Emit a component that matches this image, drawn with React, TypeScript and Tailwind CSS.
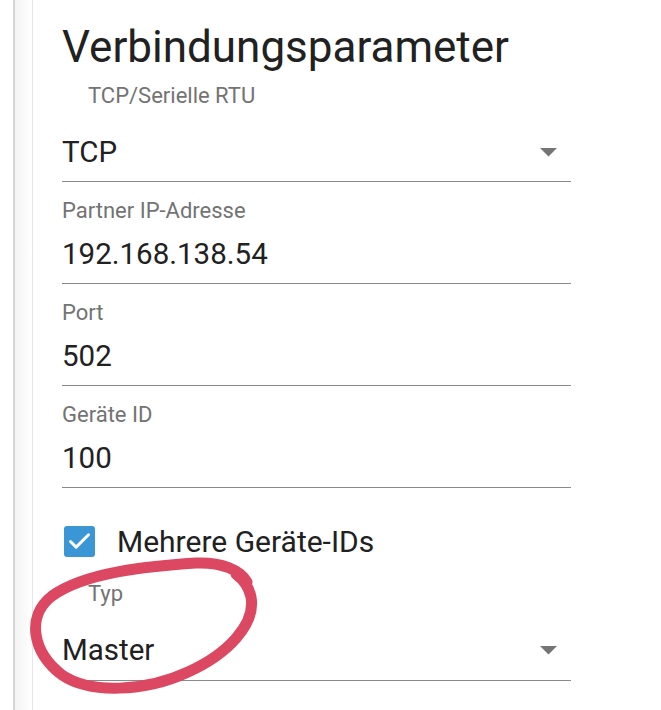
import { Check } from "lucide-react";

function Arrow(){
return(
<svg width="17" height="9" viewBox="0 0 17 9" className="mr-[14px]">
<path d="M0 0 L17 0 L8.5 8.5 Z" fill="#757575"/>
</svg>
);
}

function Field({label,value}:{label:string;value:string}){
return(
<div className="flex flex-col">
<div className="h-[56px] flex items-center text-[22px] text-[#737373]">{label}</div>
<div className="h-[32px] flex items-center text-[29.5px] text-[#212121]">{value}</div>
<div className="h-[13px]"/>
<div className="h-px bg-[#8a8a8a]"/>
</div>
);
}

export default function App(){

return(

<div className="relative w-[661px] h-[710px] bg-white overflow-hidden flex font-['Roboto',sans-serif]">

{/* side rails */}
<div className="w-[13px]"/>
<div className="w-[2px] bg-[#d6d6d6]"/>
<div className="w-[17px] bg-gradient-to-r from-[#f3f3f3] to-white"/>
<div className="w-px bg-[#e6e6e6]"/>

{/* content */}
<div className="pl-[29px] w-[538px] flex flex-col">

<div className="h-[22px]"/>
<div className="h-[50px] flex items-center text-[44px] text-[#212121]">
Verbindungsparameter
</div>

<div className="h-[46px] flex items-center pl-[26px] text-[22px] text-[#737373]">
TCP/Serielle RTU
</div>

<div className="mt-[18px] h-[32px] flex items-center justify-between text-[29.5px] text-[#212121]">
<span>TCP</span>
<Arrow/>
</div>
<div className="h-[13px]"/>
<div className="h-px bg-[#8a8a8a]"/>

<Field label="Partner IP-Adresse" value="192.168.138.54"/>
<Field label="Port" value="502"/>
<Field label="Geräte ID" value="100"/>

<div className="mt-[37px] h-[32px] flex items-center gap-[22px]">
<div className="ml-[2px] w-[31px] h-[31px] rounded-[3px] bg-[#3a96d4] flex items-center justify-center">
<Check size={27} strokeWidth={2.6} color="white"/>
</div>
<span className="text-[30px] text-[#212121]">Mehrere Geräte-IDs</span>
</div>

<div className="h-[72px] flex items-center pl-[26px] text-[22px] text-[#737373]">
Typ
</div>

<div className="mt-[5px] h-[32px] flex items-center justify-between text-[29.5px] text-[#212121]">
<span>Master</span>
<Arrow/>
</div>
<div className="h-[14px]"/>
<div className="h-px bg-[#8a8a8a]"/>

</div>

{/* hand drawn annotation */}
<svg className="absolute left-0 top-0 pointer-events-none" width="661" height="710" viewBox="0 0 661 710">
<path
d="M247 582 C240 570 222 562 196 563 C150 566 85 572 52 596 C26 616 32 652 62 675 C90 694 145 692 188 672 C228 654 256 624 251 597 C249 587 244 580 236 574"
fill="none"
stroke="#dc4862"
strokeWidth="11"
strokeLinecap="round"
strokeLinejoin="round"
/>
</svg>

</div>

);

}
